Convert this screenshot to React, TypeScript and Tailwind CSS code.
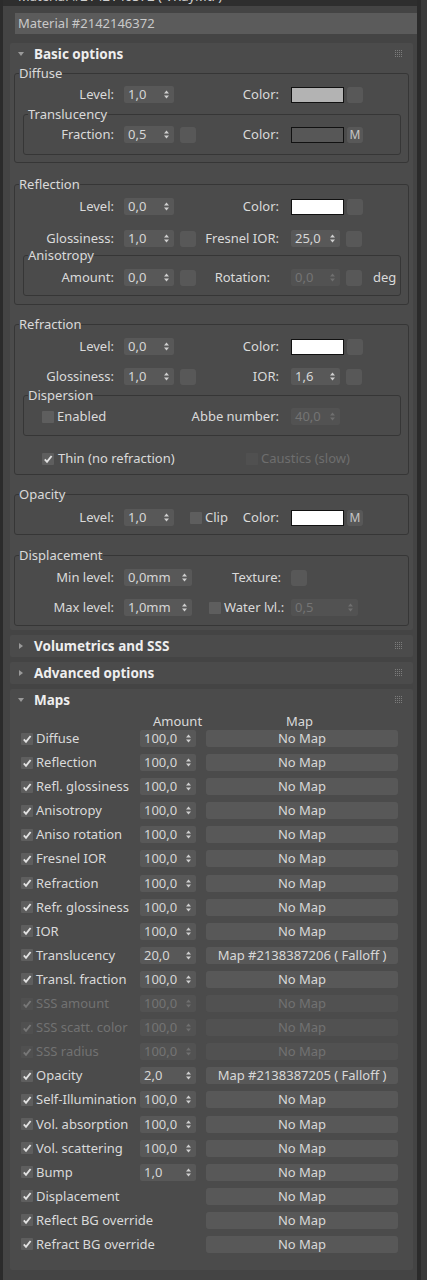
import React from 'react';

type Kids = { children?: React.ReactNode };

const Arrows = ({ off }: { off?: boolean }) => (
  <svg width="5" height="9" viewBox="0 0 5 9" className={off ? 'fill-[#6f6f6f]' : 'fill-[#cfcfcf]'}>
    <polygon points="0,3.6 2.5,0.6 5,3.6" />
    <polygon points="0,5.4 2.5,8.4 5,5.4" />
  </svg>
);

const Spin = ({ v, w, off }: { v: string; w: string; off?: boolean }) => (
  <div
    className={`${w} h-[17px] flex items-center justify-between pl-[4px] pr-[5px] rounded-[2px] ${
      off ? 'bg-[#525252] text-[#747474]' : 'bg-[#585858] text-[#d6d6d6]'
    }`}
  >
    <span>{v}</span>
    <Arrows off={off} />
  </div>
);

const Btn = ({ m, cls = '' }: { m?: boolean; cls?: string }) => (
  <div className={`w-[16px] h-[16px] rounded-[3px] bg-[#585858] flex items-center justify-center text-[12px] text-[#c6c6c6] ${cls}`}>
    {m ? 'M' : null}
  </div>
);

const Swatch = ({ color }: { color: string }) => (
  <div className={`w-[53px] h-[16px] border border-[#111] ${color}`} />
);

const Check = ({ on, off }: { on?: boolean; off?: boolean }) => (
  <div className={`w-[12px] h-[12px] shrink-0 rounded-[1px] flex items-center justify-center ${off ? 'bg-[#505050]' : 'bg-[#5e5e5e]'}`}>
    {on && (
      <svg width="10" height="10" viewBox="0 0 10 10">
        <path
          d="M1.8 5.4 L4 7.8 L8.6 2"
          fill="none"
          strokeWidth="1.9"
          className={off ? 'stroke-[#777]' : 'stroke-[#e2e2e2]'}
        />
      </svg>
    )}
  </div>
);

const Lbl = ({ w, children }: { w: string } & Kids) => (
  <span className={`${w} shrink-0 text-right whitespace-nowrap`}>{children}</span>
);

const Row = ({ mt, children }: { mt: string } & Kids) => (
  <div className={`flex items-center h-[17px] ${mt}`}>{children}</div>
);

const Group = ({ title, cls, children }: { title: string; cls: string } & Kids) => (
  <fieldset className={`border border-[#363636] rounded-[3px] ${cls}`}>
    <legend className="ml-[4px] leading-[16px] text-[#dadada]">{title}</legend>
    {children}
  </fieldset>
);

const Grip = () => (
  <svg width="8" height="8" viewBox="0 0 8 8" className="fill-[#7c7c7c]">
    {[0, 2, 4, 6].map((x) =>
      [0, 2, 4, 6].map((y) => <rect key={`${x}-${y}`} x={x} y={y} width="1" height="1" />)
    )}
  </svg>
);

const RollHead = ({ title, open }: { title: string; open?: boolean }) => (
  <div className="h-[22px] flex items-center pl-[8px] pr-[10px]">
    <svg width="6" height="6" viewBox="0 0 6 6" className="fill-[#9a9a9a]">
      {open ? <polygon points="0,1 6,1 3,5" /> : <polygon points="1,0 5,3 1,6" />}
    </svg>
    <span className="ml-[10px] font-bold text-[13.5px] text-[#eeeeee] leading-[22px]">{title}</span>
    <div className="ml-auto">
      <Grip />
    </div>
  </div>
);

const maps: { n: string; v?: string; m?: string; off?: boolean }[] = [
  { n: 'Diffuse', v: '100,0' },
  { n: 'Reflection', v: '100,0' },
  { n: 'Refl. glossiness', v: '100,0' },
  { n: 'Anisotropy', v: '100,0' },
  { n: 'Aniso rotation', v: '100,0' },
  { n: 'Fresnel IOR', v: '100,0' },
  { n: 'Refraction', v: '100,0' },
  { n: 'Refr. glossiness', v: '100,0' },
  { n: 'IOR', v: '100,0' },
  { n: 'Translucency', v: '20,0', m: 'Map #2138387206 ( Falloff )' },
  { n: 'Transl. fraction', v: '100,0' },
  { n: 'SSS amount', v: '100,0', off: true },
  { n: 'SSS scatt. color', v: '100,0', off: true },
  { n: 'SSS radius', v: '100,0', off: true },
  { n: 'Opacity', v: '2,0', m: 'Map #2138387205 ( Falloff )' },
  { n: 'Self-Illumination', v: '100,0' },
  { n: 'Vol. absorption', v: '100,0' },
  { n: 'Vol. scattering', v: '100,0' },
  { n: 'Bump', v: '1,0' },
  { n: 'Displacement' },
  { n: 'Reflect BG override' },
  { n: 'Refract BG override' },
];

export default function App() {
  return (
    <div className="w-[427px] h-[1280px] bg-[#3a3a3a] font-['Noto_Sans',sans-serif] text-[13px] leading-[17px] text-[#dadada] overflow-hidden">
      <div className="w-[421px] h-full border-l-[3px] border-r-[4px] border-[#2b2b2b] bg-[#444444]">
        {/* window title, cut off at the top */}
        <div className="h-[6px] overflow-hidden bg-[#2e2e2e]">
          <div className="-mt-[12px] ml-[15px] text-[#cfcfcf] whitespace-nowrap">Material #2142146372  ( VRayMtl )</div>
        </div>

        <div className="mt-[7px] ml-[12px] w-[402px] h-[21px] bg-[#5b5b5b] pl-[3px] leading-[21px] text-[#c9c9c9]">
          Material #2142146372
        </div>

        {/* Basic options */}
        <div className="mt-[9px] ml-[7px] w-[403px] bg-[#4b4b4b] rounded-[2px] pb-[4px]">
          <RollHead title="Basic options" open />
          <div className="mx-[4px]">
            <Group title="Diffuse" cls="pb-[7px]">
              <Row mt="mt-[5px]">
                <Lbl w="w-[99px]">Level:</Lbl>
                <Spin v="1,0" w="w-[50px] ml-[10px]" />
                <Lbl w="w-[105px]">Color:</Lbl>
                <div className="ml-[12px]"><Swatch color="bg-[#b3b3b3]" /></div>
                <Btn cls="ml-[3px]" />
              </Row>
              <Group title="Translucency" cls="mt-[3px] ml-[8px] mr-[7px] pb-[11px]">
                <Row mt="mt-[4px]">
                  <Lbl w="w-[90px]">Fraction:</Lbl>
                  <Spin v="0,5" w="w-[50px] ml-[10px]" />
                  <Btn cls="ml-[6px]" />
                  <Lbl w="w-[83px]">Color:</Lbl>
                  <div className="ml-[12px]"><Swatch color="bg-[#575757]" /></div>
                  <Btn m cls="ml-[3px]" />
                </Row>
              </Group>
            </Group>

            <Group title="Reflection" cls="mt-[13px] pb-[8px]">
              <Row mt="mt-[6px]">
                <Lbl w="w-[99px]">Level:</Lbl>
                <Spin v="0,0" w="w-[50px] ml-[10px]" />
                <Lbl w="w-[105px]">Color:</Lbl>
                <div className="ml-[12px]"><Swatch color="bg-[#ffffff]" /></div>
                <Btn cls="ml-[3px]" />
              </Row>
              <Row mt="mt-[15px]">
                <Lbl w="w-[99px]">Glossiness:</Lbl>
                <Spin v="1,0" w="w-[50px] ml-[10px]" />
                <Btn cls="ml-[6px]" />
                <Lbl w="w-[83px]">Fresnel IOR:</Lbl>
                <Spin v="25,0" w="w-[49px] ml-[12px]" />
                <Btn cls="ml-[6px]" />
              </Row>
              <Group title="Anisotropy" cls="ml-[8px] mr-[7px] pb-[9px]">
                <Row mt="mt-[6px]">
                  <Lbl w="w-[90px]">Amount:</Lbl>
                  <Spin v="0,0" w="w-[50px] ml-[10px]" />
                  <Btn cls="ml-[6px]" />
                  <Lbl w="w-[74px]">Rotation:</Lbl>
                  <Spin v="0,0" off w="w-[49px] ml-[21px]" />
                  <Btn cls="ml-[6px]" />
                  <span className="ml-[11px]">deg</span>
                </Row>
              </Group>
            </Group>

            <Group title="Refraction" cls="mt-[11px] pb-[7px]">
              <Row mt="mt-[6px]">
                <Lbl w="w-[99px]">Level:</Lbl>
                <Spin v="0,0" w="w-[50px] ml-[10px]" />
                <Lbl w="w-[105px]">Color:</Lbl>
                <div className="ml-[12px]"><Swatch color="bg-[#ffffff]" /></div>
                <Btn cls="ml-[3px]" />
              </Row>
              <Row mt="mt-[13px]">
                <Lbl w="w-[99px]">Glossiness:</Lbl>
                <Spin v="1,0" w="w-[50px] ml-[10px]" />
                <Btn cls="ml-[6px]" />
                <Lbl w="w-[83px]">IOR:</Lbl>
                <Spin v="1,6" w="w-[49px] ml-[12px]" />
                <Btn cls="ml-[6px]" />
              </Row>
              <Group title="Dispersion" cls="mt-[2px] ml-[8px] mr-[7px] pb-[10px]">
                <Row mt="mt-[5px]">
                  <div className="w-[110px] flex items-center pl-[18px]">
                    <Check />
                    <span className="ml-[3px]">Enabled</span>
                  </div>
                  <Lbl w="w-[145px]">Abbe number:</Lbl>
                  <Spin v="40,0" off w="w-[49px] ml-[12px]" />
                </Row>
              </Group>
              <Row mt="mt-[14px]">
                <div className="w-[231px] flex items-center pl-[27px]">
                  <Check on />
                  <span className="ml-[4px]">Thin (no refraction)</span>
                </div>
                <Check off />
                <span className="ml-[3px] text-[#6e6e6e]">Caustics (slow)</span>
              </Row>
            </Group>

            <Group title="Opacity" cls="mt-[11px] pb-[8px]">
              <Row mt="mt-[7px]">
                <Lbl w="w-[99px]">Level:</Lbl>
                <Spin v="1,0" w="w-[50px] ml-[10px]" />
                <div className="w-[105px] flex items-center pl-[16px]">
                  <Check />
                  <span className="ml-[3px]">Clip</span>
                  <span className="ml-auto">Color:</span>
                </div>
                <div className="ml-[12px]"><Swatch color="bg-[#ffffff]" /></div>
                <Btn m cls="ml-[3px]" />
              </Row>
            </Group>

            <Group title="Displacement" cls="mt-[12px] pb-[9px]">
              <Row mt="mt-[6px]">
                <Lbl w="w-[99px]">Min level:</Lbl>
                <Spin v="0,0mm" w="w-[68px] ml-[10px]" />
                <Lbl w="w-[89px]">Texture:</Lbl>
                <Btn cls="ml-[10px]" />
              </Row>
              <Row mt="mt-[13px]">
                <Lbl w="w-[99px]">Max level:</Lbl>
                <Spin v="1,0mm" w="w-[68px] ml-[10px]" />
                <div className="w-[95px] flex items-center pl-[17px]">
                  <Check />
                  <span className="ml-[3px] whitespace-nowrap">Water lvl.:</span>
                </div>
                <Spin v="0,5" off w="w-[67px] ml-[4px]" />
              </Row>
            </Group>
          </div>
        </div>

        <div className="mt-[5px] ml-[7px] w-[403px] bg-[#4b4b4b] rounded-[2px]">
          <RollHead title="Volumetrics and SSS" />
        </div>
        <div className="mt-[5px] ml-[7px] w-[403px] bg-[#4b4b4b] rounded-[2px]">
          <RollHead title="Advanced options" />
        </div>

        {/* Maps */}
        <div className="mt-[5px] ml-[7px] w-[403px] bg-[#4b4b4b] rounded-[2px] pb-[17px]">
          <RollHead title="Maps" open />
          <div className="flex h-[16px] leading-[16px] mt-[2px]">
            <span className="ml-[143px] w-[133px]">Amount</span>
            <span>Map</span>
          </div>
          <div className="flex flex-col gap-[7.1px] mt-[1px]">
            {maps.map((r) => (
              <div key={r.n} className={`flex items-center h-[17px] ${r.off ? 'text-[#727272]' : ''}`}>
                <div className="w-[130px] flex items-center pl-[11px] whitespace-nowrap">
                  <Check on off={r.off} />
                  <span className="ml-[3px]">{r.n}</span>
                </div>
                {r.v ? <Spin v={r.v} off={r.off} w="w-[56px]" /> : <div className="w-[56px]" />}
                <div
                  className={`ml-[10px] w-[192px] h-[17px] rounded-[3px] text-center whitespace-nowrap ${
                    r.off ? 'bg-[#515151] text-[#727272]' : 'bg-[#585858] text-[#d8d8d8]'
                  }`}
                >
                  {r.m ?? 'No Map'}
                </div>
              </div>
            ))}
          </div>
        </div>
      </div>
    </div>
  );
}
